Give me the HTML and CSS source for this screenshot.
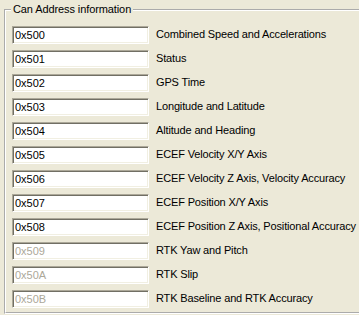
FILE: index.html
```html
<!DOCTYPE html>
<html lang="en">
<head>
    <meta charset="UTF-8">
    <title>Can Address information</title>
    <link rel="stylesheet" href="styles.css">
</head>
<body>
    <fieldset class="group">
        <legend class="group-title">Can Address information</legend>
        <div class="rows">
            <input class="addr" type="text" value="0x500"><span class="label">Combined Speed and Accelerations</span>
            <input class="addr" type="text" value="0x501"><span class="label">Status</span>
            <input class="addr" type="text" value="0x502"><span class="label">GPS Time</span>
            <input class="addr" type="text" value="0x503"><span class="label">Longitude and Latitude</span>
            <input class="addr" type="text" value="0x504"><span class="label">Altitude and Heading</span>
            <input class="addr" type="text" value="0x505"><span class="label">ECEF Velocity X/Y Axis</span>
            <input class="addr" type="text" value="0x506"><span class="label">ECEF Velocity Z Axis, Velocity Accuracy</span>
            <input class="addr" type="text" value="0x507"><span class="label">ECEF Position X/Y Axis</span>
            <input class="addr" type="text" value="0x508"><span class="label">ECEF Position Z Axis, Positional Accuracy</span>
            <input class="addr" type="text" value="0x509" disabled><span class="label">RTK Yaw and Pitch</span>
            <input class="addr" type="text" value="0x50A" disabled><span class="label">RTK Slip</span>
            <input class="addr" type="text" value="0x50B" disabled><span class="label">RTK Baseline and RTK Accuracy</span>
        </div>
    </fieldset>
</body>
</html>
```

FILE: styles.css
```css
:root {
    --face: #ece9d8;
    --shadow: #aca899;
    --dark: #716f64;
    --light: #f1efe2;
    --gray-text: #aca899;
}
html, body {
    margin: 0;
    padding: 0;
    overflow: hidden;
}
body {
    background: var(--face);
    color: #000;
    font-family: Tahoma, "Liberation Sans", Arial, sans-serif;
    font-size: 11px;
    width: 359px;
    height: 315px;
}
.group {
    margin: 3px -20px 0 4px;
    padding: 0;
    height: 311px;
    border: 2px groove #fff;
    box-sizing: border-box;
}
.group-title {
    margin-left: 5px;
    padding: 0 2px;
    line-height: 13px;
    letter-spacing: -0.1px;
}
.rows {
    display: grid;
    grid-template-columns: 137px auto;
    grid-auto-rows: 24px;
    column-gap: 7px;
    align-items: start;
    padding: 10px 0 0 6px;
}
.addr {
    width: 137px;
    height: 18px;
    box-sizing: border-box;
    margin: 0;
    padding: 0 0 0 2px;
    font: inherit;
    color: #000;
    background: #fff;
    border-style: solid;
    border-width: 1px;
    border-color: var(--shadow) #fff #fff var(--shadow);
    box-shadow: inset 1px 1px var(--dark), inset -1px -1px var(--light);
    outline: none;
}
.addr:disabled {
    color: var(--gray-text);
    background: #fff;
}
.label {
    line-height: 14px;
    padding-top: 1px;
    letter-spacing: -0.15px;
    white-space: nowrap;
}
```
